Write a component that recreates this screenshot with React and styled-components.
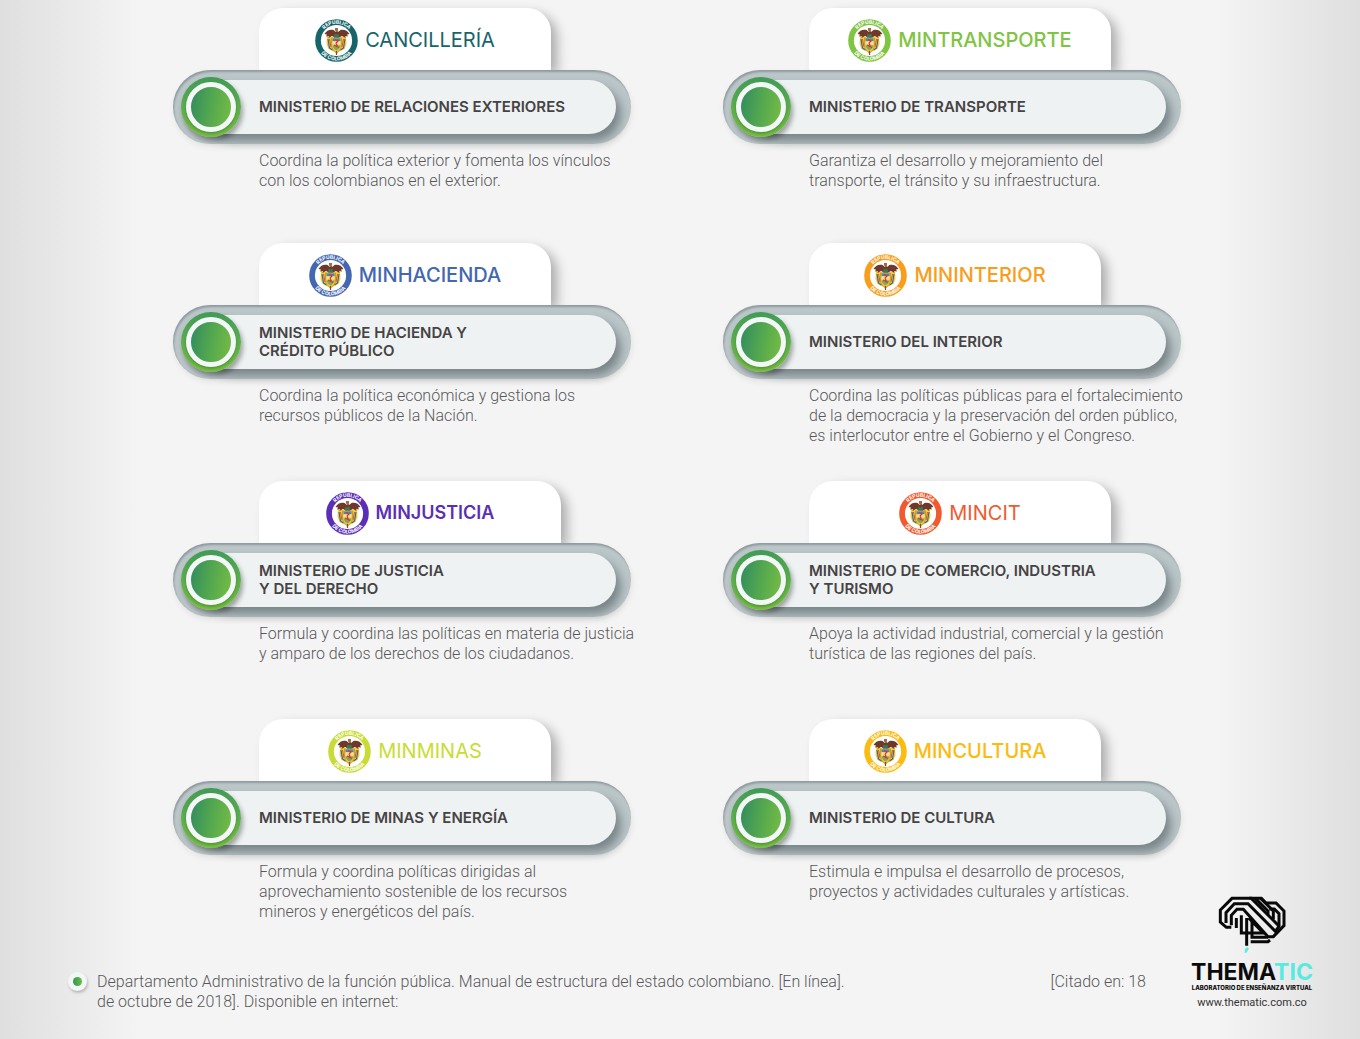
import React from 'react';
import styled, { createGlobalStyle } from 'styled-components';

const GlobalStyle = createGlobalStyle`
  *, *::before, *::after { box-sizing: border-box; }
  body {
    margin: 0;
    background: #f4f4f4;
    color: #58595b;
    font-family: Roboto, "Liberation Sans", sans-serif;
    font-size: 16px;
    font-weight: 300;
    line-height: 20px;
  }
  h2, h3, p { margin: 0; }
`;

const Page = styled.div`
  display: grid;
  grid-template-columns: minmax(0, 1fr) 124px;
  min-height: 100vh;
  padding: 8px 46px 0 0;
  background:
    linear-gradient(to right, #dfdfdf, #ebebeb 80px, #f4f4f4 140px) left / 140px 100% no-repeat,
    linear-gradient(to left, #dfdfdf, #ebebeb 80px, #f4f4f4 144px) right / 144px 100% no-repeat,
    #f4f4f4;
`;

const Main = styled.main`
  min-width: 0;
`;

const Ministries = styled.section`
  display: grid;
  grid-template-columns: repeat(2, minmax(0, 1fr));
  grid-template-rows: 235px 238px 238px auto;
  column-gap: 92px;
  padding: 0 9px 0 173px;
`;

const Card = styled.article`
  display: flex;
  flex-direction: column;
`;

const Tab = styled.header`
  display: flex;
  align-items: center;
  justify-content: center;
  gap: 7px;
  width: ${(p) => (p.$wide ? 302 : 292)}px;
  height: 62px;
  margin-left: 86px;
  padding-top: 2px;
  border-radius: 24px 24px 0 0;
  background: #fff;
  box-shadow: 7px 5px 12px -1px rgba(0, 0, 0, 0.3);
`;

const Brand = styled.h2`
  color: ${(p) => p.$color};
  font: ${(p) => p.$weight} ${(p) => p.$size}px/24px Inter, "Liberation Sans", sans-serif;
  white-space: nowrap;
`;

const Emblem = styled.svg`
  width: 43px;
  height: 43px;
  flex: none;
`;

const EmblemText = styled.text`
  fill: #fff;
  font: 700 5px Inter, "Liberation Sans", sans-serif;
  text-anchor: middle;
`;

const Bar = styled.div`
  display: flex;
  align-items: center;
  position: relative;
  height: 74px;
  padding: 0 15px 0 8px;
  border-radius: 37px;
  background: #bbc6c9;
  box-shadow:
    inset 1px 2px 2px rgba(90, 105, 110, 0.45),
    1px 3px 6px rgba(0, 0, 0, 0.07);
`;

const Knob = styled.span`
  position: relative;
  flex: none;
  display: grid;
  place-items: center;
  width: 60px;
  height: 60px;
  border-radius: 50%;
  background: linear-gradient(#419b56, #78c043);
  box-shadow: 2px 4px 5px rgba(0, 0, 0, 0.34);

  &::before {
    content: '';
    width: 50px;
    height: 50px;
    border: 5px solid #f4f7f8;
    border-radius: 50%;
    background: linear-gradient(100deg, #318b60, #50a550 45%, #76bd43);
    box-shadow: 0 2px 3px rgba(0, 60, 20, 0.3);
  }
`;

const Plate = styled.div`
  flex: 1;
  display: flex;
  align-items: center;
  height: 54px;
  margin-left: -42px;
  padding-left: 60px;
  border-radius: 27px;
  background: #eef2f3;
  box-shadow: 5px 7px 10px rgba(50, 62, 66, 0.48);
`;

const Name = styled.h3`
  color: #464344;
  font: 600 15px/18px Inter, "Liberation Sans", sans-serif;
  white-space: pre-line;
`;

const Description = styled.p`
  margin: 7px -8px 0 86px;
  white-space: pre-line;
`;

const Source = styled.footer`
  display: flex;
  align-items: flex-start;
  margin-top: 50px;
  padding: 0 44px 27px 68px;
`;

const Bullet = styled.span`
  flex: none;
  display: grid;
  place-items: center;
  width: 19px;
  height: 19px;
  margin-right: 10px;
  border-radius: 50%;
  background: #f3f6f6;
  box-shadow: 1px 2px 3px rgba(0, 0, 0, 0.22);

  &::before {
    content: '';
    width: 9px;
    height: 9px;
    border-radius: 50%;
    background: linear-gradient(to right, #2f9a52, #6cba44);
  }
`;

const Citation = styled.p`
  flex: 1;
`;

const Cited = styled.p`
  white-space: nowrap;
`;

const Sponsor = styled.aside`
  display: flex;
  flex-direction: column;
  align-items: center;
  justify-content: flex-end;
  padding-bottom: 28px;
  font-family: Inter, "Liberation Sans", sans-serif;
  color: #0b0b0b;
`;

const Brain = styled.svg`
  width: 80px;
  height: 66px;
  margin-bottom: 4px;
`;

const Wordmark = styled.strong`
  font-size: 23px;
  font-weight: 700;
  line-height: 24px;
`;

const Accent = styled.span`
  color: #57ebe1;
`;

const Tagline = styled.span`
  font-size: 6px;
  font-weight: 800;
  line-height: 8px;
  white-space: nowrap;
`;

const Site = styled.a`
  margin-top: 3px;
  color: #333;
  font: 400 11px/16px Roboto, "Liberation Sans", sans-serif;
  text-decoration: none;
`;

const ministries = [
  { brand: 'CANCILLERÍA', color: '#16656a', weight: 400, name: 'MINISTERIO DE RELACIONES EXTERIORES', text: 'Coordina la política exterior y fomenta los vínculos\ncon los colombianos en el exterior.' },
  { brand: 'MINTRANSPORTE', color: '#80c443', weight: 500, wide: true, name: 'MINISTERIO DE TRANSPORTE', text: 'Garantiza el desarrollo y mejoramiento del\ntransporte, el tránsito y su infraestructura.' },
  { brand: 'MINHACIENDA', color: '#4367b0', weight: 500, name: 'MINISTERIO DE HACIENDA Y\nCRÉDITO PÚBLICO', text: 'Coordina la política económica y gestiona los\nrecursos públicos de la Nación.' },
  { brand: 'MININTERIOR', color: '#f99d1c', weight: 500, name: 'MINISTERIO DEL INTERIOR', text: 'Coordina las políticas públicas para el fortalecimiento\nde la democracia y la preservación del orden público,\nes interlocutor entre el Gobierno y el Congreso.' },
  { brand: 'MINJUSTICIA', color: '#5b2fb5', weight: 600, size: 18, wide: true, name: 'MINISTERIO DE JUSTICIA\nY DEL DERECHO', text: 'Formula y coordina las políticas en materia de justicia\ny amparo de los derechos de los ciudadanos.' },
  { brand: 'MINCIT', color: '#f15a2f', weight: 400, wide: true, name: 'MINISTERIO DE COMERCIO, INDUSTRIA\nY TURISMO', text: 'Apoya la actividad industrial, comercial y la gestión\nturística de las regiones del país.' },
  { brand: 'MINMINAS', color: '#c9dc35', weight: 400, name: 'MINISTERIO DE MINAS Y ENERGÍA', text: 'Formula y coordina políticas dirigidas al\naprovechamiento sostenible de los recursos\nmineros y energéticos del país.' },
  { brand: 'MINCULTURA', color: '#fbbc12', weight: 500, name: 'MINISTERIO DE CULTURA', text: 'Estimula e impulsa el desarrollo de procesos,\nproyectos y actividades culturales y artísticas.' },
];

function CoatOfArms({ color, id }) {
  return (
    <Emblem viewBox="0 0 43 43" aria-hidden="true">
      <defs>
        <path id={`${id}-top`} d="M4.800 21.500a16.700 16.700 0 0 1 33.400 0" />
        <path id={`${id}-bottom`} d="M1.500 21.500a20 20 0 0 0 40 0" />
      </defs>
      <circle cx="21.500" cy="21.500" r="21.300" fill={color} />
      <circle cx="21.500" cy="21.500" r="15.600" fill="#fff" />
      <EmblemText><textPath href={`#${id}-top`} startOffset="50%">REPÚBLICA</textPath></EmblemText>
      <EmblemText><textPath href={`#${id}-bottom`} startOffset="50%">DE COLOMBIA</textPath></EmblemText>
      <path d="M12 17l-.5 8 2 5 4 2 4 2 4-2 4-2 2-5-.5-8-9.500 2z" fill="#f5cc2e" />
      <path d="M13 20l1.500 9 3 2M30 20l-1.500 9-3 2" stroke="#3d61a6" strokeWidth="1.200" fill="none" />
      <path d="M14.500 20l1.500 8M28.500 20l-1.500 8" stroke="#cd4938" strokeWidth=".9" />
      <path d="M16.500 19h10v7c0 4-2.500 6-5 8-2.500-2-5-4-5-8z" fill="#f4c836" stroke="#a58131" strokeWidth=".6" />
      <path d="M17.500 19.500h8v2.500h-8z" fill="#4b86ba" />
      <path d="M17.500 22.500h8v3h-8z" fill="#f3dfa6" />
      <path d="M17.500 26.500h8c-.5 2-2 4-4 5-2-1-3.500-3-4-5z" fill="#79a86b" />
      <path d="M20 20.500l3 1.500-2 2M19 26l5 2.500M21 24l1.500 4" stroke="#cf3b2f" strokeWidth="1.300" fill="none" />
      <path d="M20 18.500l-3-1.500-3.500 2 .5-2-3 .5 1-2-2.500-.500c2-3.500 5.500-5 9-4l2.500 2 1-2 1 2 2.500-2c3.500-1 7 .5 9 4l-2.500.500 1 2-3-.5.5 2-3.500-2-3 1.500z" fill="#70382a" />
      <path d="M19.500 14.500l2 1 2-1 .5 4h-5z" fill="#397a50" />
      <path d="M20 9h3v2.500l-1.500 1-1.500-1z" fill="#a06b43" />
      <path d="M21.500 32v4" stroke="#a33b2b" strokeWidth="1.200" />
    </Emblem>
  );
}

function BrainMark() {
  return (
    <Brain viewBox="0 0 240 198" fill="none" stroke="#090909" strokeWidth="9" aria-hidden="true">
      <path d="M58 112H43L25 96V60L60 25H118L202 109" />
      <path d="M42 99V68L67 41H108L190 124L201 109V71L187 57H172" />
      <path d="M58 106V76L75 58H94L168 140H184L216 107V63L192 39H162L148 25H112" />
      <path d="M130 25L168 63V76M146 25L184 63V88" />
      <path d="M73 114V84M88 76V129H154L110 84M104 84V167M120 96V142H168" />
      <path d="M116 155H168L174 150" />
      <path d="M105 171L111 176 104 187 98 190 99 178z" fill="#57ebe1" stroke="none" />
    </Brain>
  );
}

export default function App() {
  return (
    <>
      <GlobalStyle />
      <Page>
        <Main>
          <Ministries>
            {ministries.map((m, i) => (
              <Card key={m.brand}>
                <Tab $wide={m.wide}>
                  <CoatOfArms color={m.color} id={`arms-${i}`} />
                  <Brand $color={m.color} $weight={m.weight} $size={m.size || 20}>{m.brand}</Brand>
                </Tab>
                <Bar>
                  <Knob />
                  <Plate><Name>{m.name}</Name></Plate>
                </Bar>
                <Description>{m.text}</Description>
              </Card>
            ))}
          </Ministries>
          <Source>
            <Bullet />
            <Citation>
              Departamento Administrativo de la función pública. Manual de estructura del estado colombiano. [En línea].
              <br />
              de octubre de 2018]. Disponible en internet:
            </Citation>
            <Cited>[Citado en: 18</Cited>
          </Source>
        </Main>
        <Sponsor>
          <BrainMark />
          <Wordmark>THEMA<Accent>TIC</Accent></Wordmark>
          <Tagline>LABORATORIO DE ENSEÑANZA VIRTUAL</Tagline>
          <Site href="#thematic">www.thematic.com.co</Site>
        </Sponsor>
      </Page>
    </>
  );
}
